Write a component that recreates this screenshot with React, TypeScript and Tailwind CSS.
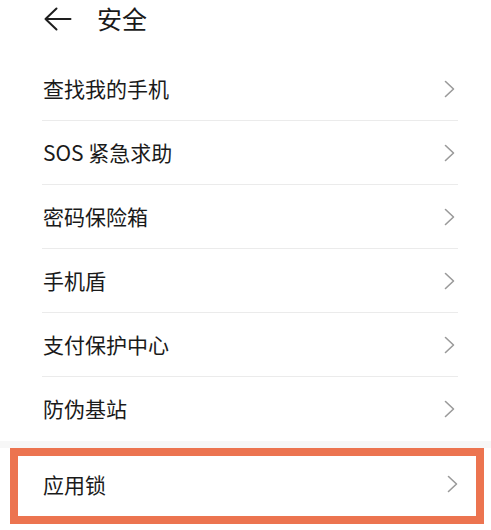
const items = ["查找我的手机", "SOS 紧急求助", "密码保险箱", "手机盾", "支付保护中心", "防伪基站"];

function Chevron() {
  return (
    <svg width="12" height="18" viewBox="0 0 12 18" fill="none" className="shrink-0">
      <polyline points="1.5,1.5 9.5,9 1.5,16.5" stroke="#9a9a9a" strokeWidth="1.6" strokeLinecap="round" strokeLinejoin="round" />
    </svg>
  );
}

export default function App() {
  return (
    <div
      className="w-[491px] h-[530px] bg-white overflow-hidden text-[#1a1a1a]"
      style={{ fontFamily: '"Noto Sans CJK SC", "Noto Sans", sans-serif' }}
    >
      {/* header */}
      <div className="h-[57px] flex items-start pl-[44px] pt-[4px]">
        <div className="flex items-center h-[30px] gap-[25px]">
          <svg width="28" height="24" viewBox="0 0 28 24" fill="none">
            <path d="M12.5 1.5 L1.5 12 L12.5 22.5 M1.5 12 H26.5" stroke="#1e1e1e" strokeWidth="2" strokeLinecap="round" strokeLinejoin="round" />
          </svg>
          <span className="text-[25px] leading-none pb-[2px]">安全</span>
        </div>
      </div>

      {/* list */}
      <div className="pl-[42px] pr-[33px]">
        {items.map((t, i) => (
          <div
            key={t}
            className={`h-[64px] flex items-center justify-between pl-[1px] pr-[2px] ${i < items.length - 1 ? "border-b border-[#ebebeb]" : ""}`}
          >
            <span className="text-[21px] leading-none pb-[1px]">{t}</span>
            <Chevron />
          </div>
        ))}
      </div>

      <div className="h-[7px] bg-[#f7f7f7]" />

      {/* highlighted row */}
      <div className="ml-[10px] w-[474px] h-[76px] border-[8px] border-[#ec7450] bg-white flex items-center justify-between pl-[25px] pr-[17px] pb-[4px]">
        <span className="text-[21px] leading-none">应用锁</span>
        <Chevron />
      </div>
    </div>
  );
}
